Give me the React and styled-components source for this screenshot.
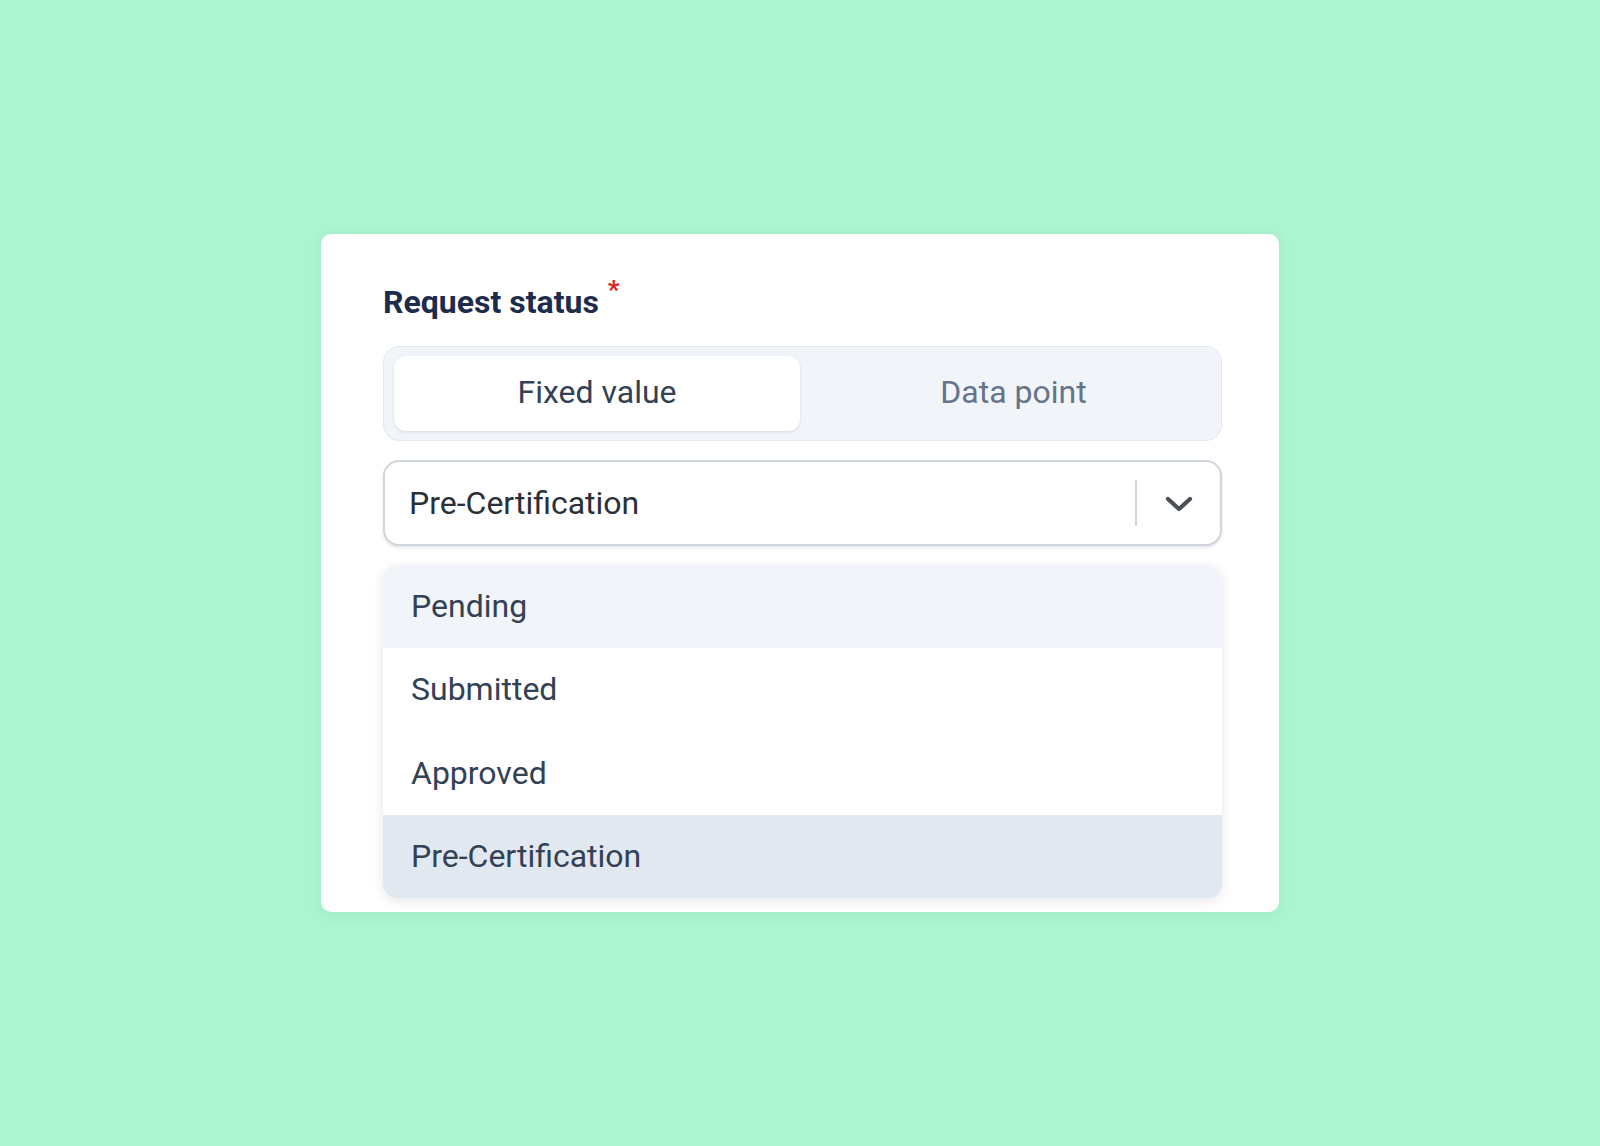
import React from "react";
import styled, { createGlobalStyle } from "styled-components";

const GlobalStyle = createGlobalStyle`
    html, body {
        margin: 0;
        padding: 0;
    }

    body {
        background: #adf5d1;
        font-family: Roboto, "Noto Sans", "Liberation Sans", sans-serif;
    }
`;

const options = ["Pending", "Submitted", "Approved", "Pre-Certification"];

const App = () => {
    const selected = "Pre-Certification";
    const hovered = "Pending";

    return <Page>
        <GlobalStyle />
        <Card>
            <Label>
                Request status
                <Required>*</Required>
            </Label>

            <Toggle>
                <ToggleButton active>Fixed value</ToggleButton>
                <ToggleButton>Data point</ToggleButton>
            </Toggle>

            <Select>
                <SelectValue>{selected}</SelectValue>
                <Indicator>
                    <Divider />
                    <Chevron>
                        <svg width="28" height="16" viewBox="0 0 28 16" fill="none">
                            <path d="M3 3l11 10L25 3" stroke="#4b5057" strokeWidth="4.2" strokeLinecap="round" strokeLinejoin="round" />
                        </svg>
                    </Chevron>
                </Indicator>
            </Select>

            <Menu>
                {options.map(option => (
                    <Option
                        key={option}
                        selected={option === selected}
                        hovered={option === hovered}
                    >
                        {option}
                    </Option>
                ))}
            </Menu>
        </Card>
    </Page>
};

const Page = styled.div`
    min-height: 100vh;
    display: flex;
    align-items: center;
    justify-content: center;
`;

const Card = styled.div`
    width: 958px;
    box-sizing: border-box;
    padding: 49px 57px 14px 62px;
    background: #ffffff;
    border-radius: 10px;
    box-shadow: 0 2px 14px rgba(20, 80, 50, 0.08);
`;

const Label = styled.div`
    font-size: 32px;
    line-height: 38px;
    font-weight: 700;
    color: #1d2b4d;
    margin-bottom: 25px;
`;

const Required = styled.span`
    color: #e02424;
    font-size: 26px;
    font-weight: 700;
    vertical-align: 14px;
    line-height: 0;
    margin-left: 9px;
`;

const Toggle = styled.div`
    display: grid;
    grid-template-columns: 406px 1fr;
    column-gap: 16px;
    padding: 9px 10px;
    background: #f1f5f9;
    border: 1px solid #e2e8f0;
    border-radius: 16px;
    margin-bottom: 19px;
`;

const ToggleButton = styled.div`
    height: 75px;
    box-sizing: border-box;
    padding-bottom: 3px;
    display: flex;
    align-items: center;
    justify-content: center;
    font-size: 32px;
    color: ${props => props.active ? "#334155" : "#64748b"};
    background: ${props => props.active ? "#ffffff" : "transparent"};
    border-radius: 12px;
    box-shadow: ${props => props.active ? "0 1px 3px rgba(15, 23, 42, 0.12)" : "none"};
`;

const Select = styled.div`
    height: 86px;
    box-sizing: border-box;
    display: flex;
    align-items: center;
    border: 2px solid #cfd5dd;
    border-radius: 16px;
    background: #ffffff;
    box-shadow: 0 2px 3px rgba(15, 23, 42, 0.1);
    margin-bottom: 19px;
`;

const SelectValue = styled.div`
    flex: 1;
    padding-left: 24px;
    padding-bottom: 1px;
    font-size: 32px;
    color: #2a2f38;
`;

const Indicator = styled.div`
    display: flex;
    align-items: center;
    height: 100%;
`;

const Divider = styled.div`
    width: 2px;
    height: 46px;
    background: #cfd5dd;
`;

const Chevron = styled.div`
    width: 83px;
    display: flex;
    align-items: center;
    justify-content: center;
    padding-top: 2px;
`;

const Menu = styled.div`
    border-radius: 14px;
    overflow: hidden;
    background: #ffffff;
    box-shadow: 0 3px 12px rgba(15, 23, 42, 0.1);
`;

const Option = styled.div`
    height: 83.25px;
    box-sizing: border-box;
    padding-bottom: 1px;
    display: flex;
    align-items: center;
    padding-left: 28px;
    font-size: 32px;
    color: #334155;
    background: ${props => props.selected ? "#e2e8f0" : props.hovered ? "#f1f5f9" : "#ffffff"};
`;

export default App;
